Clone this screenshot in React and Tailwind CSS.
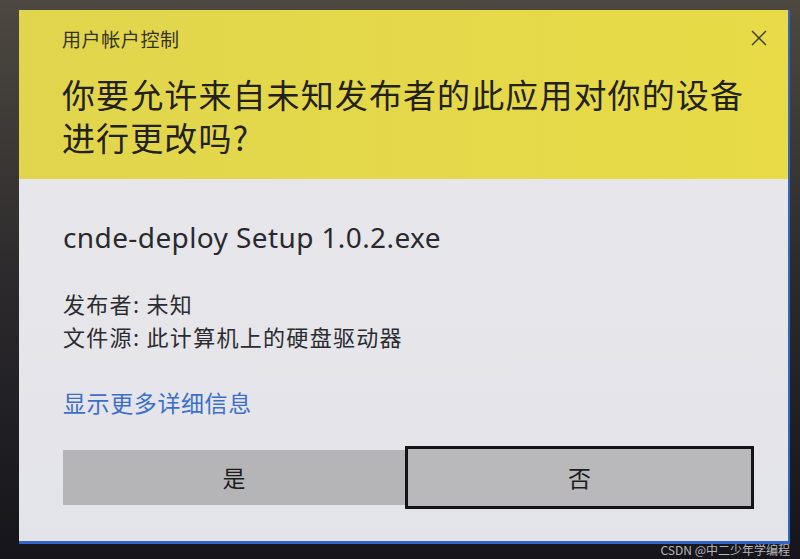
import React from 'react';

const cjk = { fontFamily: '"Noto Sans CJK SC", "Noto Sans", sans-serif' };
const latin = { fontFamily: '"Noto Sans", "Noto Sans CJK SC", sans-serif' };

function CloseIcon() {
    return (
        <svg width="18" height="18" viewBox="0 0 18 18" className="text-[#3a3628]">
            <path d="M2 2 L16 16 M16 2 L2 16" stroke="currentColor" strokeWidth="1.4" fill="none" />
        </svg>
    );
}

export default function App() {
    return (
        <div className="relative w-[800px] h-[559px] overflow-hidden bg-gradient-to-b from-[#4d4840] via-[#2c2a2c] to-[#15151b] pt-[10px] pl-[19px]" style={cjk}>
            {/* UAC dialog */}
            <div className="w-[771px] h-[534px] flex flex-col bg-[#e5e5ea] border-r-2 border-b-[3px] border-[#3465c8]">

                {/* Yellow header */}
                <div className="h-[169px] bg-gradient-to-r from-[#e1d54d] to-[#e8db47] pl-[43px] pr-[20px] pt-[16px]">
                    <div className="flex items-center justify-between h-[24px]">
                        <span className="text-[19px] tracking-[0.6px] text-[#35321f] leading-none">用户帐户控制</span>
                        <CloseIcon />
                    </div>
                    <div className="mt-[23px] text-[33px] text-[#23211a] tracking-[1.1px]">
                        <div className="h-[43px] leading-[43px]">你要允许来自未知发布者的此应用对你的设备</div>
                        <div className="h-[43px] leading-[43px]">进行更改吗?</div>
                    </div>
                </div>

                {/* Body */}
                <div className="flex-1 pl-[44px] pr-[33px] pt-[40px] bg-gradient-to-b from-[#e7e7eb] to-[#e3e3ea]">
                    <div className="text-[28px] tracking-[0.4px] leading-[36px] text-[#2a2a2e]" style={latin}>cnde-deploy Setup 1.0.2.exe</div>

                    <div className="mt-[32px] text-[22px] tracking-[1.3px] leading-[33px] text-[#2c2c30]">
                        <div>发布者: 未知</div>
                        <div>文件源: 此计算机上的硬盘驱动器</div>
                    </div>

                    <div className="mt-[33px] text-[23px] tracking-[0.6px] leading-[33px] text-[#3d6fc9]">显示更多详细信息</div>

                    <div className="mt-[27px] flex items-center">
                        <button className="w-[342px] h-[55px] bg-[#b5b5b8] text-[23px] text-[#1c1c1e]">是</button>
                        <button className="w-[349px] h-[63px] bg-[#b9b9bc] border-[3px] border-[#141414] text-[23px] text-[#1c1c1e]">否</button>
                    </div>
                </div>
            </div>

            {/* watermark */}
            <div className="absolute right-[10px] bottom-[3px] text-[12px] text-white/70 leading-none">CSDN @中二少年学编程</div>
        </div>
    );
}
